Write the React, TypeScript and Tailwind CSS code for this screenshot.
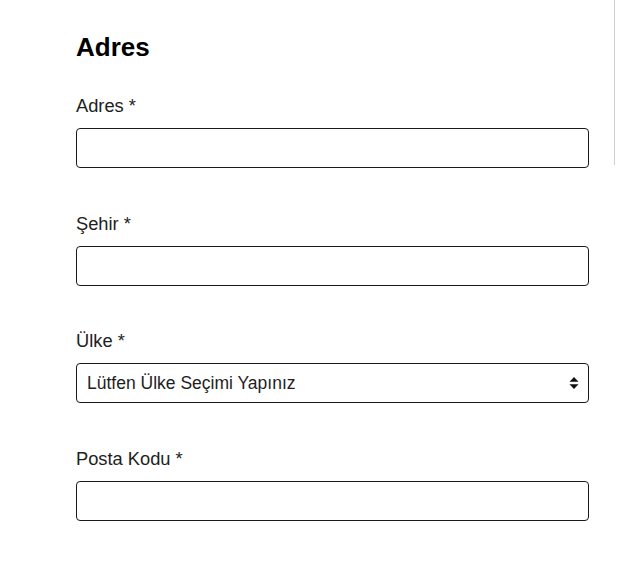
import { useState } from "react";

const fields = [
  { name: "address", label: "Adres *", type: "text" },
  { name: "city", label: "Şehir *", type: "text" },
  { name: "country", label: "Ülke *", type: "select" },
  { name: "zip", label: "Posta Kodu *", type: "text" },
];

function SelectArrows() {
  return (
    <svg width="10" height="14" viewBox="0 0 10 14" className="pointer-events-none absolute right-[10px] top-1/2 -translate-y-1/2">
      <path d="M5 1 L9.5 5.8 H0.5 Z" fill="#111" />
      <path d="M5 13 L9.5 8.2 H0.5 Z" fill="#111" />
    </svg>
  );
}

export default function App() {
  const [values, setValues] = useState<Record<string, string>>({});

  return (
    <div className="flex min-h-[577px] bg-white font-['Liberation_Sans',Arial,sans-serif] text-[#1e1e1e]">
      <div className="w-[589px] shrink-0 pl-[76px] pt-[32px]">
        <h2 className="mb-[32px] text-[26px] leading-[30px] font-bold text-black">Adres</h2>

        {fields.map((f) => (
          <div key={f.name} className="mb-[43.5px]">
            <label className="mb-[10px] block text-[18.3px] leading-[24px]">{f.label}</label>
            {f.type === "select" ? (
              <div className="relative">
                <select
                  value={values[f.name] ?? ""}
                  onChange={(e) => setValues({ ...values, [f.name]: e.target.value })}
                  className="h-[40px] w-full appearance-none rounded-[4px] border border-[#1a1a1a] bg-white pl-[10px] pr-8 text-[17.5px] text-[#1e1e1e] outline-none"
                >
                  <option value="">Lütfen Ülke Seçimi Yapınız</option>
                  <option value="TR">Türkiye</option>
                </select>
                <SelectArrows />
              </div>
            ) : (
              <input
                type="text"
                value={values[f.name] ?? ""}
                onChange={(e) => setValues({ ...values, [f.name]: e.target.value })}
                className="block h-[40px] w-full rounded-[4px] border border-[#1a1a1a] bg-white px-[10px] text-[18px] outline-none"
              />
            )}
          </div>
        ))}
      </div>

      <div className="ml-[25px] h-[165px] w-px bg-[#cfcfcf]" />
    </div>
  );
}
